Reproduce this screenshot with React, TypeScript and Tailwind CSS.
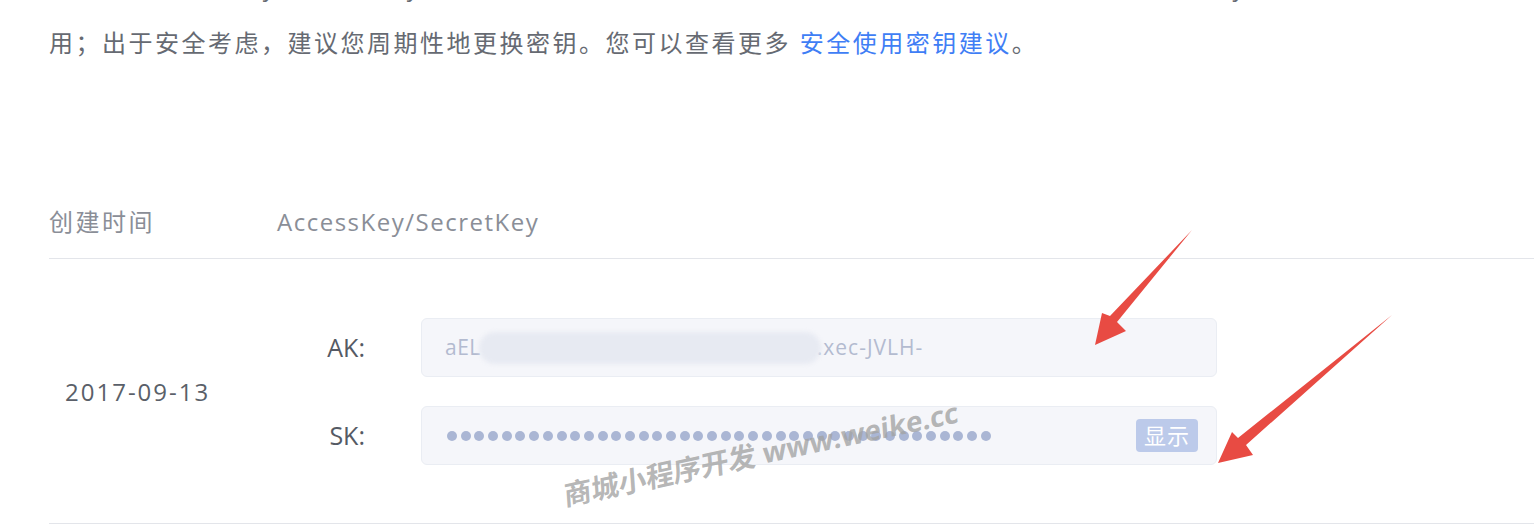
const dots = Array.from({ length: 40 });

function Arrows() {
  return (
    <svg className="pointer-events-none absolute left-0 top-0" width="1534" height="532">
      <polygon
        points="1192,230 1117,322 1126,331 1095,345 1102,313 1110,316"
        fill="#e84b43"
      />
      <polygon
        points="1392,315 1246,445 1253,455 1218,463 1232,432 1238,438"
        fill="#e84b43"
      />
    </svg>
  );
}

function KeyLine({ label, children }: { label: string; children: React.ReactNode }) {
  return (
    <div className="flex items-center">
      <span className="w-[88px] text-right text-[25px] text-[#555a64]">{label}</span>
      <div className="ml-[56px] flex h-[59px] w-[796px] items-center rounded-[6px] border border-[#eaedf3] bg-[#f5f6fa]">
        {children}
      </div>
    </div>
  );
}

export default function App() {
  return (
    <div className="relative h-[532px] w-[1534px] overflow-hidden bg-white pl-[49px] font-['Open_Sans','Noto_Sans_CJK_SC',sans-serif]">
      <p className="-mt-[41px] text-[24px] leading-[56px] tracking-[2.5px] text-[#666a72]">
        <span className="pl-[38px]">注：AccessKey/SecretKey（AK/SK）是您访问云服务的密钥，两对密钥可同时使用，AccessKey</span>
        <br />
        用；出于安全考虑，建议您周期性地更换密钥。您可以查看更多{" "}
        <a className="text-[#3f7ef5]">安全使用密钥建议</a>。
      </p>

      <div className="mt-[114px] flex h-[74px] items-center border-b border-[#e3e5ea] text-[24px] text-[#8a8e97]">
        <span className="w-[228px] tracking-[2.5px]">创建时间</span>
        <span className="tracking-[1.5px]">AccessKey/SecretKey</span>
      </div>

      <div className="flex border-b border-[#e3e5ea] pb-[58px] pt-[59px]">
        <div className="flex w-[228px] items-center pl-[16px] text-[24px] tracking-[2px] text-[#5a5f69]">
          2017-09-13
        </div>
        <div className="flex flex-col gap-[29px]">
          <KeyLine label="AK:">
            <span className="pl-[23px] text-[21px] tracking-[0.5px] text-[#b3bbd0]">aEL</span>
            <span className="-ml-[2px] -mr-[4px] h-[32px] w-[342px] rounded-full bg-[#e7eaf2] blur-[2px]" />
            <span className="text-[21px] tracking-[1px] text-[#b3bbd0]">.xec-JVLH-</span>
          </KeyLine>
          <KeyLine label="SK:">
            <div className="flex gap-[3.7px] pl-[25px]">
              {dots.map((_, i) => (
                <span key={i} className="h-[10px] w-[10px] rounded-full bg-[#aab6d4]" />
              ))}
            </div>
            <span className="ml-auto mr-[18px] flex h-[33px] w-[62px] items-center justify-center rounded-[4px] bg-[#bccaea] text-[22px] tracking-[1px] text-white">
              显示
            </span>
          </KeyLine>
        </div>
      </div>

      <Arrows />

      <div className="pointer-events-none absolute left-[564px] top-[474px] origin-left -rotate-[12deg] -skew-x-[8deg] whitespace-nowrap text-[28px] font-bold text-[#a3a3a3]/80">
        商城小程序开发 www.weike.cc
      </div>
    </div>
  );
}
